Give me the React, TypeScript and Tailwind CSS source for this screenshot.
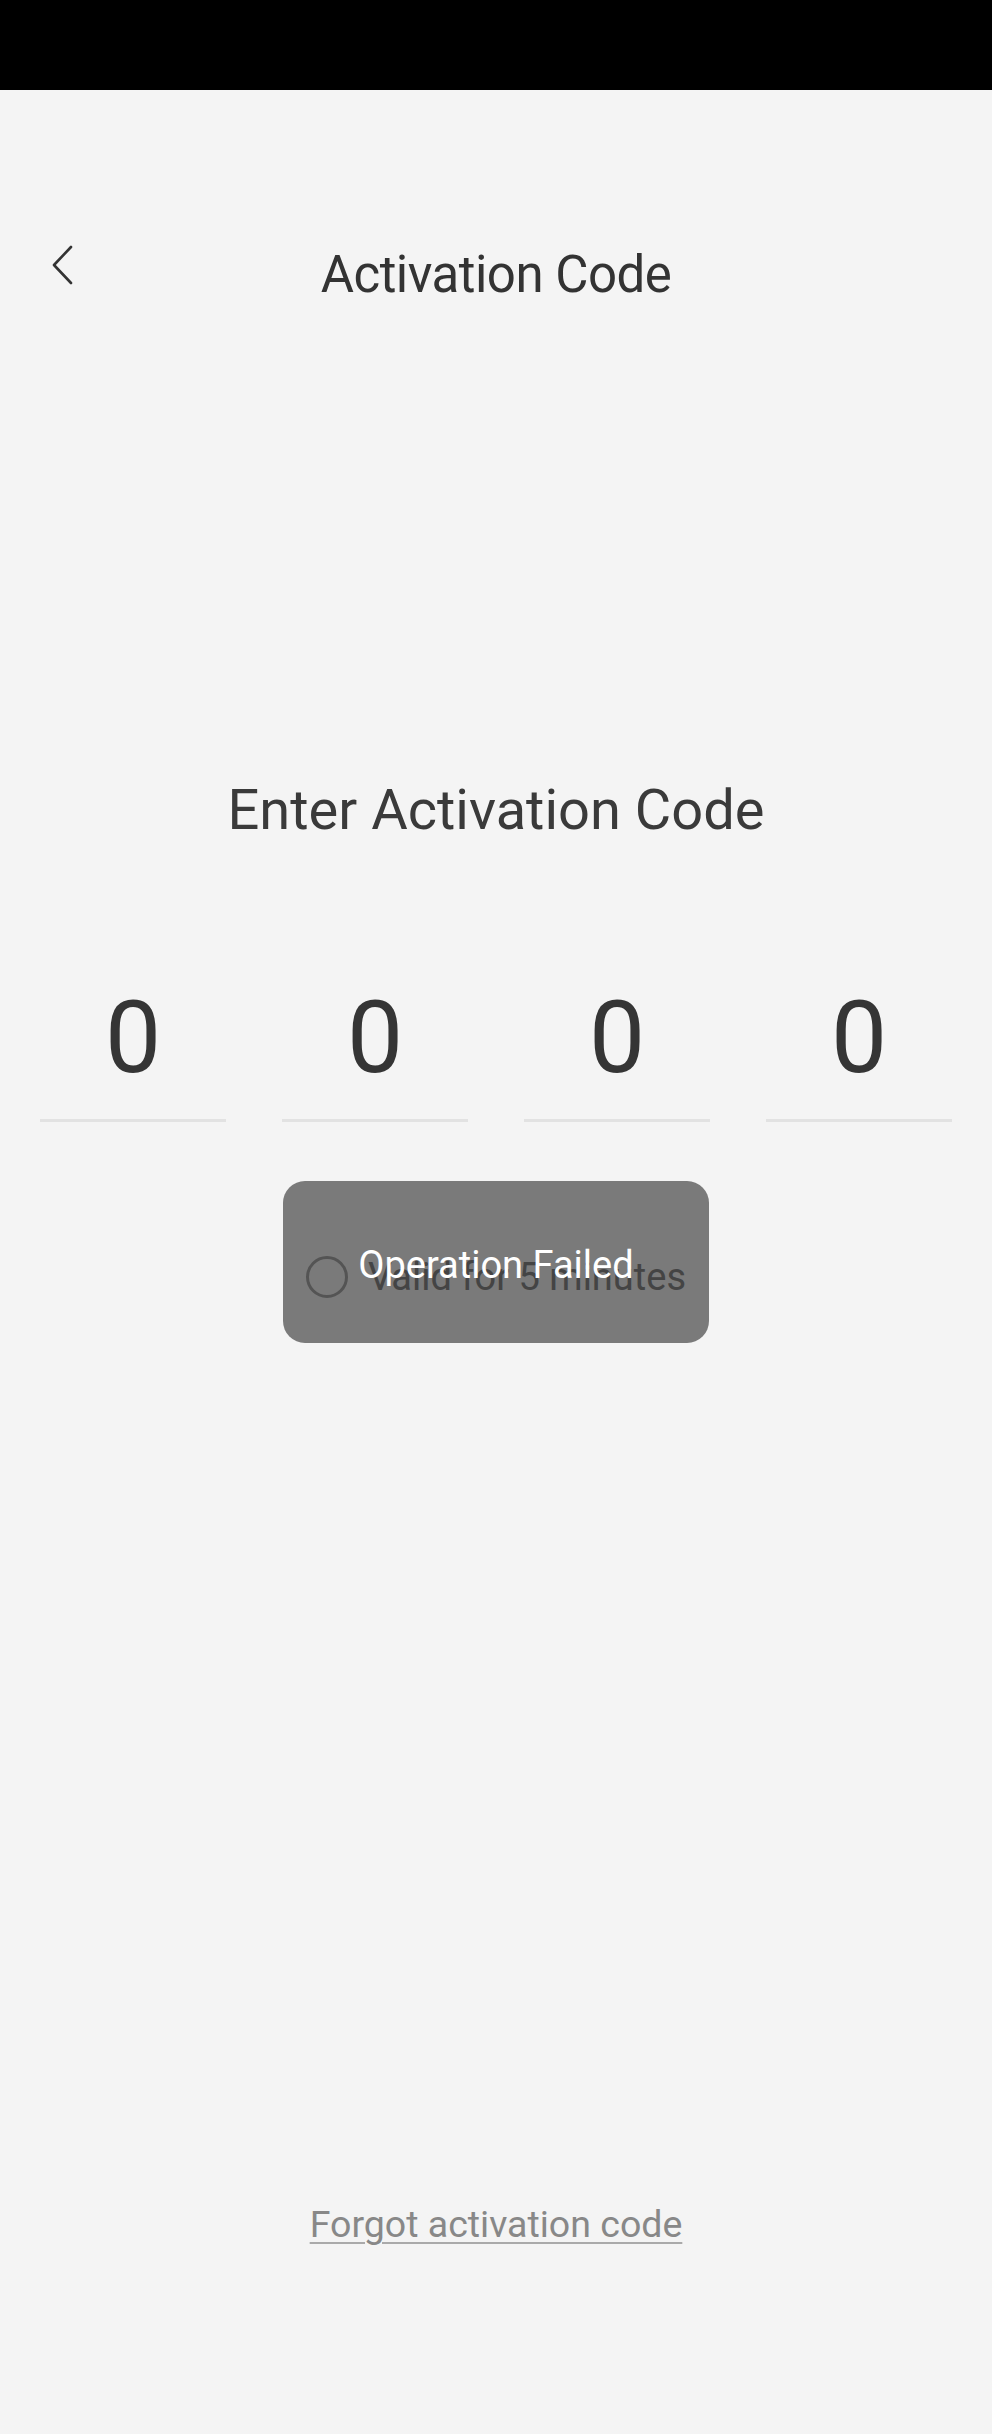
import React from 'react';

const digits = ['0', '0', '0', '0'];

function BackIcon() {
  return (
    <svg width="22" height="40" viewBox="0 0 22 40" fill="none" className="-translate-y-[9px]">
      <path d="M20 2 L3 20 L20 38" stroke="#333333" strokeWidth="2.6" strokeLinecap="round" strokeLinejoin="round" />
    </svg>
  );
}

export default function App() {
  return (
    <div className="h-[2434px] w-full bg-[#f4f4f4] font-['Roboto',sans-serif] overflow-hidden">
      {/* status bar */}
      <div className="h-[90px] bg-black" />

      {/* header */}
      <div className="mt-[124px] h-[120px] grid grid-cols-[1fr_auto_1fr] items-center">
        <div className="pl-[51px] flex items-center">
          <BackIcon />
        </div>
        <h1 className="text-[51px] leading-none text-[#333333] tracking-[-0.01em]">Activation Code</h1>
        <div />
      </div>

      {/* prompt */}
      <p className="mt-[448px] text-center text-[56px] leading-none text-[#3a3a3a]">Enter Activation Code</p>

      {/* code cells */}
      <div className="mt-[150px] flex gap-[56px] px-[40px]">
        {digits.map((d, i) => (
          <div key={i} className="w-[186px] flex flex-col items-center">
            <span className="text-[100px] leading-none text-[#353535]">{d}</span>
            <div className="mt-[31px] h-[3px] w-full bg-[#e2e2e2]" />
          </div>
        ))}
      </div>

      {/* timer + toast */}
      <div className="relative mt-[134px] flex items-center justify-center gap-[20px] h-[42px]">
        <div className="w-[42px] h-[42px] rounded-full border-[3px] border-[#a8a8a8]" />
        <span className="text-[38px] leading-none text-[#888888]">Valid for 5 minutes</span>

        <div className="absolute left-1/2 -translate-x-1/2 -top-[75px] w-[426px] h-[162px] rounded-[22px] bg-black/50 flex items-center justify-center">
          <span className="pt-[6px] text-[38px] leading-none text-white">Operation Failed</span>
        </div>
      </div>

      {/* link */}
      <div className="mt-[908px] flex justify-center">
        <a className="text-[37.5px] leading-none text-[#888888] underline decoration-[#aaaaaa] decoration-2 underline-offset-[5px]">
          Forgot activation code
        </a>
      </div>
    </div>
  );
}
